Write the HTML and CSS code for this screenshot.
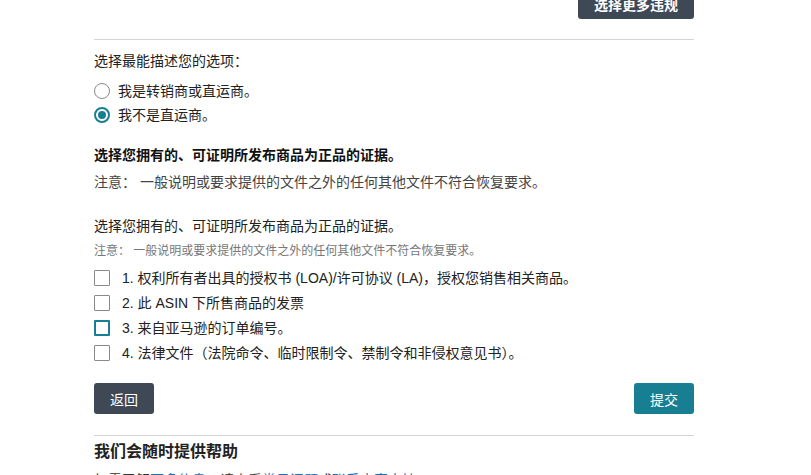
FILE: index.html
```html
<!DOCTYPE html>
<html lang="zh-CN">
<head>
<meta charset="utf-8">
<link rel="stylesheet" href="styles.css">
</head>
<body>
<div class="page">
  <div class="top-bar">
    <button class="btn btn-dark btn-wide">选择更多违规</button>
  </div>
  <hr class="rule rule-top">

  <p class="label">选择最能描述您的选项：</p>
  <div class="radios">
    <label class="opt"><span class="radio"></span>我是转销商或直运商。</label>
    <label class="opt"><span class="radio checked"></span>我不是直运商。</label>
  </div>

  <p class="heading">选择您拥有的、可证明所发布商品为正品的证据。</p>
  <p class="note">注意： 一般说明或要求提供的文件之外的任何其他文件不符合恢复要求。</p>

  <p class="label label-2">选择您拥有的、可证明所发布商品为正品的证据。</p>
  <p class="small-note">注意： 一般说明或要求提供的文件之外的任何其他文件不符合恢复要求。</p>

  <div class="checks">
    <label class="opt opt-check"><span class="box"></span>1. 权利所有者出具的授权书 (LOA)/许可协议 (LA)，授权您销售相关商品。</label>
    <label class="opt opt-check"><span class="box"></span>2. 此 ASIN 下所售商品的发票</label>
    <label class="opt opt-check"><span class="box focus"></span>3. 来自亚马逊的订单编号。</label>
    <label class="opt opt-check"><span class="box"></span>4. 法律文件（法院命令、临时限制令、禁制令和非侵权意见书）。</label>
  </div>

  <div class="actions">
    <button class="btn btn-dark">返回</button>
    <button class="btn btn-teal">提交</button>
  </div>

  <hr class="rule rule-bottom">
  <h2 class="help-title">我们会随时提供帮助</h2>
  <p class="help-text">如需了解<a class="link">更多信息</a>，请查看<a class="link">常见问题</a>或<a class="link">联系卖家支持</a>。</p>
</div>
</body>
</html>
```

FILE: styles.css
```css
* { box-sizing: border-box; }
html, body { margin: 0; padding: 0; background: #fff; overflow: hidden; }
body {
  font-family: "Liberation Sans", "Noto Sans CJK SC", sans-serif;
  color: #222;
  font-size: 14px;
}
.page {
  width: 600px;
  margin-left: 94px;
}
p { margin: 0; }
.top-bar {
  display: flex;
  justify-content: flex-end;
  margin-top: -12px;
}
.btn {
  height: 31px;
  border: none;
  border-radius: 3px;
  color: #fff;
  font-family: "Liberation Sans", "Noto Sans CJK SC", sans-serif;
  font-size: 14px;
  padding: 0 16px;
  cursor: pointer;
}
.btn-wide { width: 116px; font-weight: bold; }
.btn-dark { background: #3f4855; }
.btn-teal { background: #187f92; }
.rule {
  border: none;
  border-top: 1px solid #d5d5d5;
  margin: 0;
}
.rule-top { margin-top: 20px; }
.label {
  margin-top: 11px;
  line-height: 20px;
  color: #222;
}
.radios { margin-top: 8px; }
.opt {
  display: flex;
  align-items: center;
  height: 24px;
  line-height: 20px;
  color: #222;
}
.radio {
  width: 16px;
  height: 16px;
  border-radius: 50%;
  border: 1px solid #8a8a8a;
  margin-right: 8px;
  display: flex;
  align-items: center;
  justify-content: center;
  flex: none;
}
.radio.checked { border: 2px solid #187f92; }
.radio.checked::after {
  content: "";
  width: 8px;
  height: 8px;
  border-radius: 50%;
  background: #187f92;
}
.heading {
  margin-top: 18px;
  line-height: 20px;
  font-weight: bold;
  color: #111;
}
.note {
  margin-top: 7px;
  line-height: 20px;
  color: #444;
}
.label-2 { margin-top: 24px; }
.small-note {
  margin-top: 6px;
  font-size: 12px;
  line-height: 18px;
  color: #777;
}
.checks { margin-top: 5px; }
.opt-check { height: 25px; }
.box {
  width: 16px;
  height: 16px;
  border: 1px solid #8a8a8a;
  border-radius: 1px;
  margin-right: 12px;
  flex: none;
}
.box.focus { border: 2px solid #187f92; }
.actions {
  margin-top: 18px;
  display: flex;
  justify-content: space-between;
}
.actions .btn { width: 60px; padding: 0; }
.rule-bottom { margin-top: 21px; }
.help-title {
  margin: 5px 0 0;
  font-size: 16px;
  line-height: 22px;
  font-weight: bold;
  color: #222;
}
.help-text {
  margin-top: 7px;
  line-height: 20px;
  color: #333;
}
.link { color: #1f6fb5; }
```
